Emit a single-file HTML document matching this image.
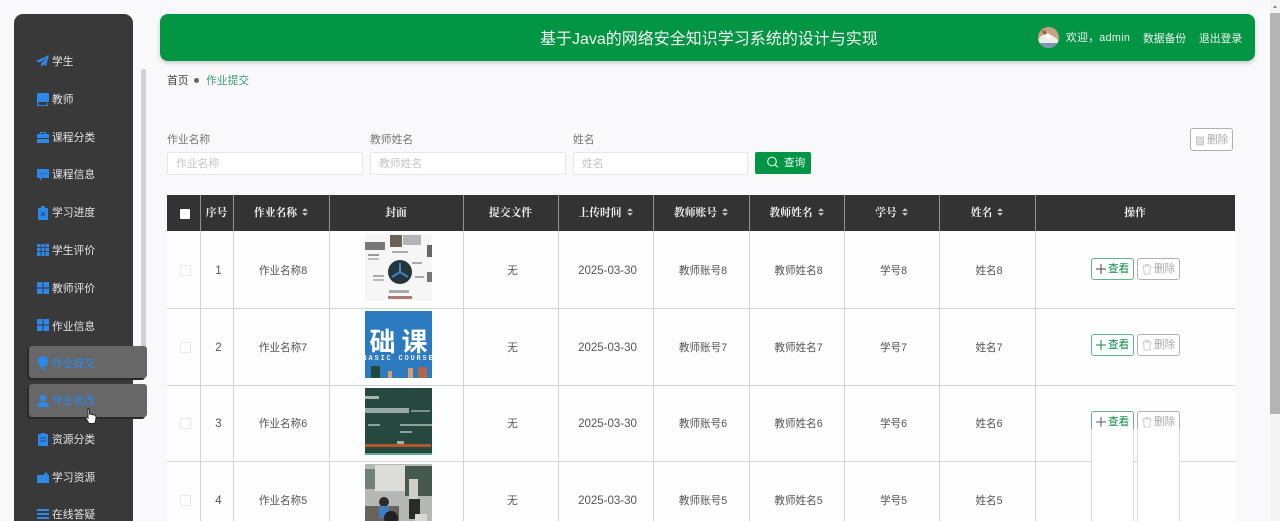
<!DOCTYPE html>
<html lang="zh"><head><meta charset="utf-8"><title>作业提交</title>
<style>
html,body{margin:0;padding:0;width:1280px;height:521px;overflow:hidden;background:#f9f8fb}
body{position:relative;font-family:"Liberation Sans","Noto Sans CJK SC",sans-serif;font-size:12px;color:#555}
.a{position:absolute;white-space:nowrap}
#side{left:14px;top:14px;width:119px;height:530px;background:#393939;border-radius:9px 9px 0 0}
.mi{position:absolute;left:52px;color:#e4e4e4;font-size:10.8px;line-height:16px;white-space:nowrap;margin-top:1px}
.ic{position:absolute;left:36px;width:14px;height:14px}
.act{position:absolute;left:29px;width:118px;background:#676767;border-radius:3px;box-shadow:-2px 2px 0 #2a2a2a}
#top{left:160px;top:14px;width:1095px;height:47px;background:#029543;border-radius:8px;box-shadow:0 2px 5px rgba(0,0,0,.2)}
.inp{position:absolute;top:152px;height:21px;background:#fff;border:1px solid #e6e6e8;border-radius:2px;color:#c4c4c4;font-size:10.8px;line-height:22px;padding-left:8px;box-sizing:content-box}
.lb{position:absolute;top:132px;font-size:10.8px;line-height:16px;color:#777}
#tb{left:167px;top:195px;width:1068px;height:326px;background:#fefdfe}
#hd{position:absolute;left:0;top:0;width:1068px;height:36px;background:#333}
.th{position:absolute;top:0;height:36px;line-height:37px;text-align:center;color:#f0f0f0;font-weight:bold;font-size:10.8px;font-family:"Liberation Serif","Noto Serif CJK SC",serif;white-space:nowrap}
.s{display:inline-block;width:6px;height:8px;margin-left:5px;vertical-align:0}
.v{position:absolute;top:0;bottom:0;width:1px;background:#d2d2d2}
.vh{position:absolute;top:0;height:36px;width:1px;background:#8b9693}
.h{position:absolute;left:0;width:1068px;height:1px;background:#d4d4d4}
.c{position:absolute;text-align:center;font-size:10.6px;line-height:16px;color:#555;white-space:nowrap;margin:1px 0 0 2px}
.d{font-size:11.5px}
.cb{position:absolute;left:13px;width:9px;height:9px;border:1px solid #e8e8e8;border-radius:2px;background:#fff}
.img{position:absolute;left:198px;width:67px;height:67px;overflow:hidden}
.btn{position:absolute;height:22px;border-radius:3px;background:#fff;font-size:10.6px;line-height:20px;white-space:nowrap;box-sizing:border-box}
.b1{left:924px;width:43px;border:1px solid #62b48a;color:#0c8a4a;padding-left:16px}
.b2{left:970px;width:43px;border:1px solid #b1b1b1;color:#a8a8a8;padding-left:16px}
.btn svg{position:absolute;left:3px;top:4px}
</style></head><body>

<div class="a" id="side"></div>
<div class="a" style="left:141px;top:69px;width:5px;height:290px;background:#d2d2d4;border-radius:2px"></div>

<div class="act" style="top:346px;height:32px"></div>
<div class="act" style="top:384px;height:33px"></div>

<svg class="ic" style="top:54px" viewBox="0 0 14 14"><path d="M13 1 0 7l3.500 1.500L11 3.500 5 9.500V13l2.500-2.500L10 12z" fill="#2d88ea"/></svg>
<div class="mi" style="top:53px">学生</div>
<svg class="ic" style="top:92px" viewBox="0 0 14 14"><path d="M2 1h10a1 1 0 0 1 1 1v7a1 1 0 0 1-1 1H2.500v3H11v-2h1v3H3a1.500 1.500 0 0 1-2-1V2a1 1 0 0 1 1-1z" fill="#2d88ea"/></svg>
<div class="mi" style="top:91px">教师</div>
<svg class="ic" style="top:130px" viewBox="0 0 14 14"><path d="M1 4h3V2h6v2h3v4H1zM5 3v1h4V3zM1 9h12v4H1z" fill="#2d88ea"/></svg>
<div class="mi" style="top:129px">课程分类</div>
<svg class="ic" style="top:168px" viewBox="0 0 14 14"><path d="M1 1h12v9H6l-2 3v-3H1z" fill="#2d88ea"/><path d="M4 5h1v1H4zM7 5h1v1H7zM10 5h1v1h-1z" fill="#393939"/></svg>
<div class="mi" style="top:166px">课程信息</div>
<svg class="ic" style="top:206px" viewBox="0 0 14 14"><path d="M2 2h3V0h4v2h3v12H2z" fill="#2d88ea"/><path d="m5 6 4 4M9 6l-4 4" stroke="#1a4f88" fill="none"/></svg>
<div class="mi" style="top:204px">学习进度</div>
<svg class="ic" style="top:243px" viewBox="0 0 14 14"><path d="M1 1h12v12H1z" fill="#2d88ea"/><path d="M1 4.500h12M1 8.500h12M5 1v12M9 1v12" stroke="#393939" stroke-width=".8"/></svg>
<div class="mi" style="top:242px">学生评价</div>
<svg class="ic" style="top:281px" viewBox="0 0 14 14"><path d="M1 1h5.500v5.500H1zM7.500 1H13v5.500H7.500zM1 7.500h5.500V13H1zM7.500 7.500H13V13H7.500z" fill="#2d88ea"/></svg>
<div class="mi" style="top:280px">教师评价</div>
<svg class="ic" style="top:318px" viewBox="0 0 14 14"><path d="M1 1h5.500v5.500H1zM7.500 1H13v5.500H7.500zM1 7.500h5.500V13H1zM7.500 7.500H13V13H7.500z" fill="#2d88ea"/></svg>
<div class="mi" style="top:318px">作业信息</div>
<svg class="ic" style="top:356px" viewBox="0 0 14 14"><path d="M7 0a5.200 5.200 0 0 1 3 9.500V11H4V9.500A5.200 5.200 0 0 1 7 0zM5 12h4v1.500H5z" fill="#2d88ea"/></svg>
<div class="mi" style="top:355px;color:#2d88ea">作业提交</div>
<svg class="ic" style="top:394px" viewBox="0 0 14 14"><circle cx="7" cy="4" r="3.200" fill="#2d88ea"/><path d="M1 13c0-3 2-5 6-5s6 2 6 5z" fill="#2d88ea"/></svg>
<div class="mi" style="top:392px;color:#2d88ea">作业批改</div>
<svg class="a" style="left:84px;top:407px" width="14" height="18" viewBox="0 0 14 18"><path d="M4 1.500c1 0 1.500.5 1.500 1.500v4l5 1c1 .3 1.500 1 1.500 2l-.5 4-1 2.500H5l-3-5c-.5-1 .5-1.700 1.500-1L4 11V3c0-1 0-1.500 0-1.500z" fill="#fff" stroke="#222" stroke-width=".9"/></svg>
<svg class="ic" style="top:432px" viewBox="0 0 14 14"><path d="M2 2h3V1h4v1h3v12H2z" fill="#2d88ea"/><path d="M4 6h6M4 9h6" stroke="#1a4f88"/></svg>
<div class="mi" style="top:431px">资源分类</div>
<svg class="ic" style="top:470px" viewBox="0 0 14 14"><path d="M1 5h6l3-3 2 2-1 1h2v8H1z" fill="#2d88ea"/></svg>
<div class="mi" style="top:469px">学习资源</div>
<svg class="ic" style="top:507px" viewBox="0 0 14 14"><path d="M1 2h12v2H1zM1 6h12v2H1zM1 10h12v2H1z" fill="#2d88ea"/></svg>
<div class="mi" style="top:506px">在线答疑</div>

<div class="a" id="top"></div>
<div class="a" style="left:540px;top:29px;font-size:16px;line-height:21px;color:#f4f4f4">基于Java的网络安全知识学习系统的设计与实现</div>
<svg class="a" style="left:1038px;top:27px" width="21" height="21" viewBox="0 0 21 21"><defs><clipPath id="av"><circle cx="10.500" cy="10.500" r="10.500"/></clipPath></defs><g clip-path="url(#av)"><rect width="21" height="21" fill="#c9a184"/><path d="M3 9 10 6l8 5 3 3v7H0v-8z" fill="#ececec"/><path d="M0 16h21v5H0z" fill="#7f95a8"/><path d="M4 4l3 3M6 3l2 4" stroke="#a5452c" stroke-width="1.200"/><circle cx="10" cy="10" r="2" fill="#fff"/></g></svg>
<div class="a" style="left:1066px;top:30px;font-size:10.8px;line-height:16px;color:#f1f1f1;letter-spacing:.3px">欢迎，admin</div>
<div class="a" style="left:1143px;top:31px;font-size:10.8px;line-height:16px;color:#f1f1f1">数据备份</div>
<div class="a" style="left:1199px;top:31px;font-size:10.8px;line-height:16px;color:#f1f1f1">退出登录</div>

<div class="a" style="left:167px;top:73px;font-size:10.8px;line-height:16px;color:#444">首页</div>
<div class="a" style="left:194px;top:78px;width:5px;height:5px;border-radius:50%;background:#666"></div>
<div class="a" style="left:206px;top:73px;font-size:10.8px;line-height:16px;color:#3e9c70">作业提交</div>

<div class="lb" style="left:167px">作业名称</div>
<div class="inp" style="left:167px;width:186px">作业名称</div>
<div class="lb" style="left:370px">教师姓名</div>
<div class="inp" style="left:370px;width:186px">教师姓名</div>
<div class="lb" style="left:573px">姓名</div>
<div class="inp" style="left:573px;width:165px">姓名</div>
<div class="a" style="left:755px;top:152px;width:56px;height:22px;background:#029543;border-radius:2px"></div>
<svg class="a" style="left:766px;top:155px" width="14" height="14" viewBox="0 0 14 14"><circle cx="6" cy="6.500" r="4.300" fill="none" stroke="#eaf5ef" stroke-width="1.100"/><path d="m9.200 9.800 2.600 2.600" stroke="#eaf5ef" stroke-width="1.100"/></svg>
<div class="a" style="left:784px;top:155px;font-size:10.6px;line-height:17px;color:#eef7f2">查询</div>

<div class="btn a" style="left:1190px;top:128px;width:43px;height:23px;border:1px solid #b0b0b0;color:#a8a8a8;line-height:22px;padding-left:16px">删除
<svg style="left:4px;top:6px" width="10" height="11" viewBox="0 0 10 11"><path d="M1.500 2h7v8h-7z" fill="#ddd" stroke="#bbb" stroke-width=".8"/></svg></div>

<div class="a" id="tb">
 <div class="v" style="left:33px"></div><div class="v" style="left:66px"></div><div class="v" style="left:162px"></div>
 <div class="v" style="left:296px"></div><div class="v" style="left:391px"></div><div class="v" style="left:486px"></div>
 <div class="v" style="left:582px"></div><div class="v" style="left:677px"></div><div class="v" style="left:772px"></div><div class="v" style="left:868px"></div>
 <div id="hd">
  <div style="position:absolute;left:13px;top:14px;width:10px;height:10px;background:#fff;border-radius:1px"></div>
  <div class="vh" style="left:33px"></div><div class="vh" style="left:66px"></div><div class="vh" style="left:162px"></div>
  <div class="vh" style="left:296px"></div><div class="vh" style="left:391px"></div><div class="vh" style="left:486px"></div>
  <div class="vh" style="left:582px"></div><div class="vh" style="left:677px"></div><div class="vh" style="left:772px"></div><div class="vh" style="left:868px"></div>
  <div class="th" style="left:33px;width:33px">序号</div>
  <div class="th" style="left:66px;width:96px">作业名称<svg class="s" viewBox="0 0 7 9"><path d="M3.500 0 7 3.500H0zM0 5.500h7L3.500 9z" fill="#c4c4c4"/></svg></div>
  <div class="th" style="left:162px;width:134px">封面</div>
  <div class="th" style="left:296px;width:95px">提交文件</div>
  <div class="th" style="left:391px;width:95px">上传时间<svg class="s" viewBox="0 0 7 9"><path d="M3.500 0 7 3.500H0zM0 5.500h7L3.500 9z" fill="#c4c4c4"/></svg></div>
  <div class="th" style="left:486px;width:96px">教师账号<svg class="s" viewBox="0 0 7 9"><path d="M3.500 0 7 3.500H0zM0 5.500h7L3.500 9z" fill="#c4c4c4"/></svg></div>
  <div class="th" style="left:582px;width:95px">教师姓名<svg class="s" viewBox="0 0 7 9"><path d="M3.500 0 7 3.500H0zM0 5.500h7L3.500 9z" fill="#c4c4c4"/></svg></div>
  <div class="th" style="left:677px;width:95px">学号<svg class="s" viewBox="0 0 7 9"><path d="M3.500 0 7 3.500H0zM0 5.500h7L3.500 9z" fill="#c4c4c4"/></svg></div>
  <div class="th" style="left:772px;width:96px">姓名<svg class="s" viewBox="0 0 7 9"><path d="M3.500 0 7 3.500H0zM0 5.500h7L3.500 9z" fill="#c4c4c4"/></svg></div>
  <div class="th" style="left:868px;width:200px">操作</div>
 </div>
 <div class="h" style="top:113px"></div><div class="h" style="top:190px"></div><div class="h" style="top:266px"></div>

 <!-- row 1 -->
 <div class="cb" style="top:70px"></div>
 <div class="c d" style="left:33px;width:33px;top:67px">1</div>
 <div class="c" style="left:66px;width:96px;top:67px">作业名称8</div>
 <div class="img" style="top:39px"><svg width="67" height="67" viewBox="0 0 67 67"><rect width="67" height="67" fill="#f6f6f6"/><rect x="0" y="8" width="20" height="8" fill="#777"/><rect x="25" y="1" width="12" height="12" fill="#6a6255"/><rect x="38" y="1" width="18" height="10" fill="#b4b4b4"/><rect x="62" y="11" width="5" height="12" fill="#666"/><rect x="62" y="38" width="5" height="10" fill="#777"/><circle cx="35" cy="38" r="12" fill="#26343c"/><path d="m35 38V29M35 38l-8 5M35 38l8 5" stroke="#3a87c4" stroke-width="2"/><rect x="3" y="20" width="11" height="2" fill="#999"/><rect x="3" y="24" width="11" height="2" fill="#bbb"/><rect x="8" y="41" width="11" height="2" fill="#aaa"/><rect x="8" y="45" width="11" height="2" fill="#bbb"/><rect x="24" y="56" width="20" height="3" fill="#aaa"/><rect x="23" y="62" width="24" height="3" fill="#a87a70"/><rect x="27" y="17" width="16" height="2" fill="#aaa"/><rect x="47" y="28" width="10" height="2" fill="#aaa"/><rect x="50" y="42" width="9" height="2" fill="#aaa"/></svg></div>
 <div class="c" style="left:296px;width:95px;top:67px">无</div>
 <div class="c d" style="left:391px;width:95px;top:67px">2025-03-30</div>
 <div class="c" style="left:486px;width:96px;top:67px">教师账号8</div>
 <div class="c" style="left:582px;width:95px;top:67px">教师姓名8</div>
 <div class="c" style="left:677px;width:95px;top:67px">学号8</div>
 <div class="c" style="left:772px;width:96px;top:67px">姓名8</div>
 <div class="btn b1" style="top:63px">查看<svg width="12" height="12" viewBox="0 0 12 12"><path d="M6 1v10M1 6h10" stroke="#444" fill="none"/></svg></div>
 <div class="btn b2" style="top:63px">删除<svg width="12" height="12" viewBox="0 0 12 12"><path d="M1.500 3h9M4.500 3V1.500h3V3M2.500 3l.7 8h5.600l.7-8" stroke="#ccc" fill="none"/></svg></div>

 <!-- row 2 -->
 <div class="cb" style="top:147px"></div>
 <div class="c d" style="left:33px;width:33px;top:144px">2</div>
 <div class="c" style="left:66px;width:96px;top:144px">作业名称7</div>
 <div class="img" style="top:116px"><svg width="67" height="67" viewBox="0 0 67 67"><rect width="67" height="67" fill="#2c7ac0"/><text x="33.500" y="40" text-anchor="middle" font-size="26" font-weight="bold" fill="#fff" font-family="Liberation Sans,Noto Sans CJK SC,sans-serif" textLength="58" lengthAdjust="spacing">础课</text><text x="33.500" y="49" text-anchor="middle" font-size="7" font-weight="bold" fill="#e8f0f8" letter-spacing="1.800" font-family="Liberation Mono,monospace">BASIC COURSE</text><rect x="6" y="55" width="9" height="12" fill="#1f4a3a"/><rect x="23" y="60" width="4" height="7" fill="#d89a70"/><rect x="43" y="57" width="5" height="10" fill="#d89a70"/><rect x="53" y="56" width="9" height="11" fill="#b0664a"/></svg></div>
 <div class="c" style="left:296px;width:95px;top:144px">无</div>
 <div class="c d" style="left:391px;width:95px;top:144px">2025-03-30</div>
 <div class="c" style="left:486px;width:96px;top:144px">教师账号7</div>
 <div class="c" style="left:582px;width:95px;top:144px">教师姓名7</div>
 <div class="c" style="left:677px;width:95px;top:144px">学号7</div>
 <div class="c" style="left:772px;width:96px;top:144px">姓名7</div>
 <div class="btn b1" style="top:139px">查看<svg width="12" height="12" viewBox="0 0 12 12"><path d="M6 1v10M1 6h10" stroke="#0c8a4a" fill="none"/></svg></div>
 <div class="btn b2" style="top:139px">删除<svg width="12" height="12" viewBox="0 0 12 12"><path d="M1.500 3h9M4.500 3V1.500h3V3M2.500 3l.7 8h5.600l.7-8" stroke="#ccc" fill="none"/></svg></div>

 <!-- row 3 -->
 <div class="cb" style="top:223px"></div>
 <div class="c d" style="left:33px;width:33px;top:220px">3</div>
 <div class="c" style="left:66px;width:96px;top:220px">作业名称6</div>
 <div class="img" style="top:193px"><svg width="67" height="67" viewBox="0 0 67 67"><rect width="67" height="67" fill="#27483e"/><rect x="0" y="8" width="14" height="3" fill="#a8b8b0"/><rect x="0" y="20" width="44" height="5" fill="#98aaa2"/><rect x="46" y="22" width="19" height="2" fill="#7d9088"/><rect x="3" y="36" width="12" height="2" fill="#8fa299"/><rect x="35" y="36" width="32" height="2" fill="#8fa299"/><rect x="35" y="43" width="12" height="2" fill="#8fa299"/><rect x="0" y="56" width="66" height="3" fill="#b4572f"/><rect x="32" y="53" width="7" height="3" fill="#aaa"/><rect x="0" y="65" width="67" height="2" fill="#5fae90"/></svg></div>
 <div class="c" style="left:296px;width:95px;top:220px">无</div>
 <div class="c d" style="left:391px;width:95px;top:220px">2025-03-30</div>
 <div class="c" style="left:486px;width:96px;top:220px">教师账号6</div>
 <div class="c" style="left:582px;width:95px;top:220px">教师姓名6</div>
 <div class="c" style="left:677px;width:95px;top:220px">学号6</div>
 <div class="c" style="left:772px;width:96px;top:220px">姓名6</div>
 <div class="btn" style="left:924px;top:216px;width:43px;height:120px;border:1px solid #dcdcdc"></div>
 <div class="btn" style="left:970px;top:216px;width:43px;height:120px;border:1px solid #dcdcdc"></div>
 <div class="btn" style="left:924px;top:216px;width:43px;height:18px;border:1px solid #62b48a;border-bottom:0;border-radius:3px 3px 0 0;color:#0c8a4a;padding-left:16px">查看<svg width="12" height="12" viewBox="0 0 12 12"><path d="M6 1v10M1 6h10" stroke="#555" fill="none"/></svg></div>
 <div class="btn" style="left:970px;top:216px;width:43px;height:18px;border:1px solid #b1b1b1;border-bottom:0;border-radius:3px 3px 0 0;color:#a8a8a8;padding-left:16px">删除<svg width="12" height="12" viewBox="0 0 12 12"><path d="M1.500 3h9M4.500 3V1.500h3V3M2.500 3l.7 8h5.600l.7-8" stroke="#ccc" fill="none"/></svg></div>

 <!-- row 4 -->
 <div class="cb" style="top:300px"></div>
 <div class="c d" style="left:33px;width:33px;top:297px">4</div>
 <div class="c" style="left:66px;width:96px;top:297px">作业名称5</div>
 <div class="img" style="top:269px"><svg width="67" height="67" viewBox="0 0 67 67"><rect width="67" height="67" fill="#b5b8b4"/><rect x="10" y="1" width="30" height="26" fill="#dcdcd8"/><rect x="40" y="2" width="27" height="30" fill="#46594f"/><rect x="0" y="5" width="10" height="20" fill="#6e8278"/><rect x="44" y="15" width="9" height="20" fill="#cfcfca"/><rect x="44" y="35" width="11" height="20" fill="#2b2b2b"/><rect x="0" y="42" width="34" height="25" fill="#6a6258"/><circle cx="19" cy="38" r="5" fill="#2d2a28"/><rect x="14" y="42" width="10" height="12" fill="#3a7fc8"/><circle cx="26" cy="54" r="7" fill="#222"/><rect x="50" y="50" width="12" height="17" fill="#d8d8d4"/></svg></div>
 <div class="c" style="left:296px;width:95px;top:297px">无</div>
 <div class="c d" style="left:391px;width:95px;top:297px">2025-03-30</div>
 <div class="c" style="left:486px;width:96px;top:297px">教师账号5</div>
 <div class="c" style="left:582px;width:95px;top:297px">教师姓名5</div>
 <div class="c" style="left:677px;width:95px;top:297px">学号5</div>
 <div class="c" style="left:772px;width:96px;top:297px">姓名5</div>
</div>

<div class="a" style="left:1270px;top:0;width:10px;height:521px;background:#f5f5f6"></div>
<div class="a" style="left:1270px;top:13px;width:10px;height:401px;background:#b4b4b4"></div>
<div class="a" style="left:1273px;top:5px;width:0;height:0;border-left:2.500px solid transparent;border-right:2.500px solid transparent;border-bottom:3px solid #888"></div>
</body></html>
